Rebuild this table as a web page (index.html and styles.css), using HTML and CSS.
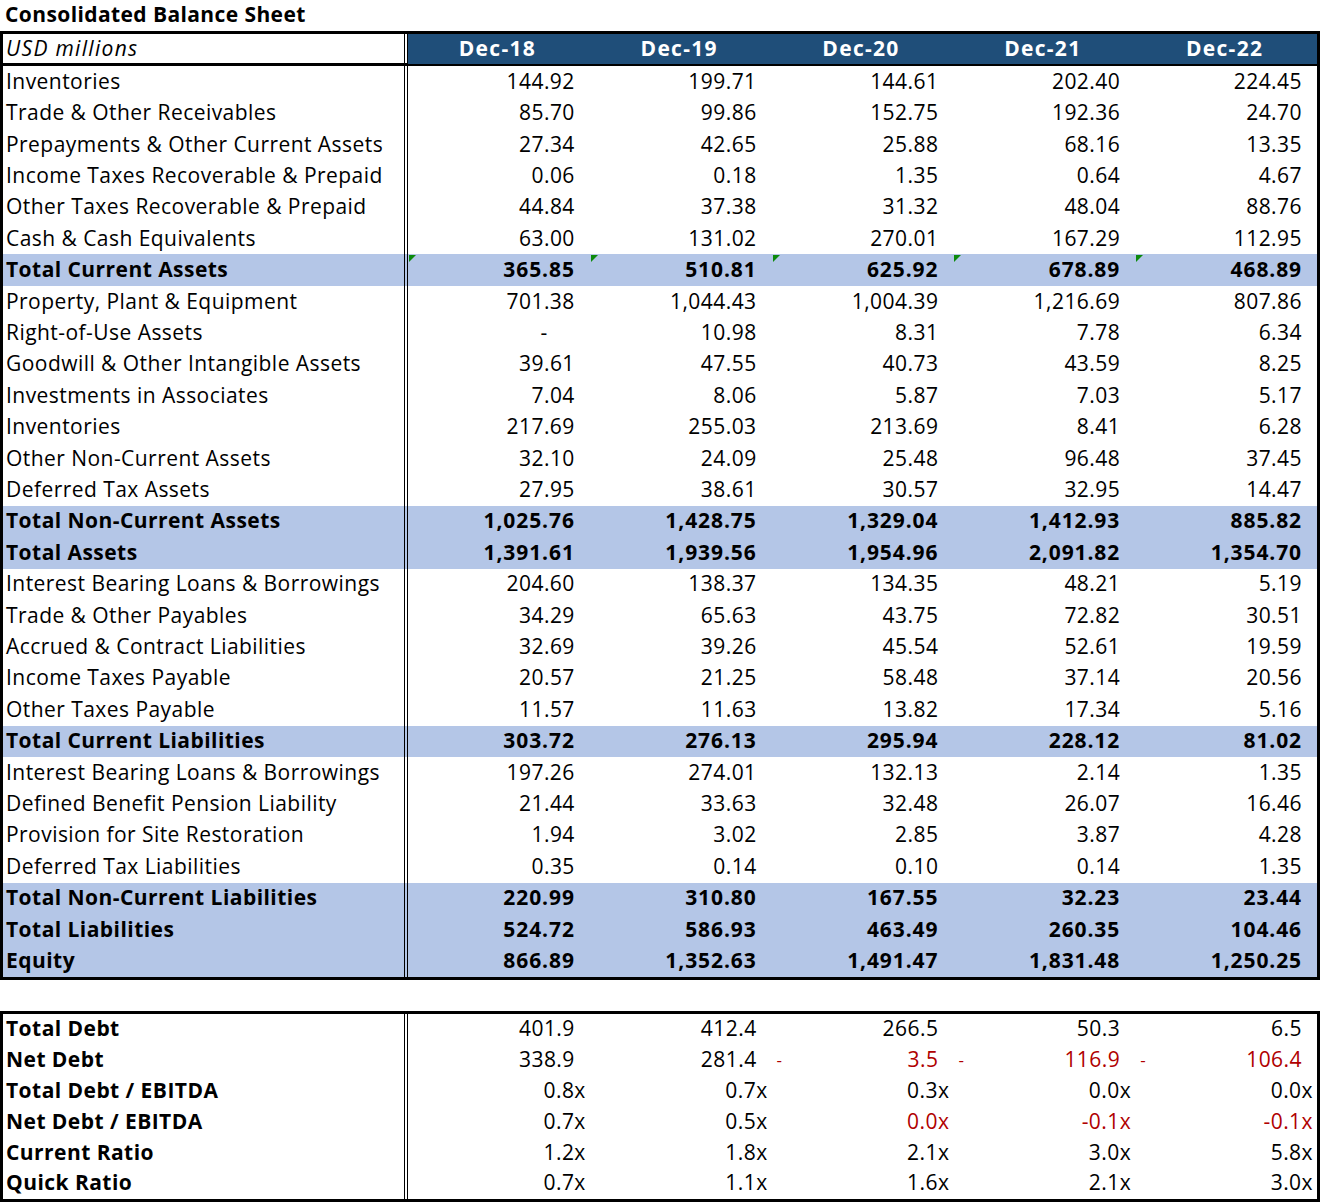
FILE: index.html
```html
<!DOCTYPE html>
<html>
<head>
<meta charset="utf-8">
<link rel="stylesheet" href="styles.css">
</head>
<body>
<div class="title">Consolidated Balance Sheet</div>
<div class="tbl main">
  <div class="row head">
    <div class="label unit">USD millions</div>
    <div class="hcell">Dec-18</div><div class="hcell">Dec-19</div><div class="hcell">Dec-20</div><div class="hcell">Dec-21</div><div class="hcell">Dec-22</div>
  </div>
  <div class="row"><div class="label">Inventories</div><div class="cell">144.92</div><div class="cell">199.71</div><div class="cell">144.61</div><div class="cell">202.40</div><div class="cell">224.45</div></div>
  <div class="row"><div class="label">Trade &amp; Other Receivables</div><div class="cell">85.70</div><div class="cell">99.86</div><div class="cell">152.75</div><div class="cell">192.36</div><div class="cell">24.70</div></div>
  <div class="row"><div class="label">Prepayments &amp; Other Current Assets</div><div class="cell">27.34</div><div class="cell">42.65</div><div class="cell">25.88</div><div class="cell">68.16</div><div class="cell">13.35</div></div>
  <div class="row"><div class="label">Income Taxes Recoverable &amp; Prepaid</div><div class="cell">0.06</div><div class="cell">0.18</div><div class="cell">1.35</div><div class="cell">0.64</div><div class="cell">4.67</div></div>
  <div class="row"><div class="label">Other Taxes Recoverable &amp; Prepaid</div><div class="cell">44.84</div><div class="cell">37.38</div><div class="cell">31.32</div><div class="cell">48.04</div><div class="cell">88.76</div></div>
  <div class="row"><div class="label">Cash &amp; Cash Equivalents</div><div class="cell">63.00</div><div class="cell">131.02</div><div class="cell">270.01</div><div class="cell">167.29</div><div class="cell">112.95</div></div>
  <div class="row total"><div class="label">Total Current Assets</div><div class="cell flag">365.85</div><div class="cell flag">510.81</div><div class="cell flag">625.92</div><div class="cell flag">678.89</div><div class="cell flag">468.89</div></div>
  <div class="row"><div class="label">Property, Plant &amp; Equipment</div><div class="cell">701.38</div><div class="cell">1,044.43</div><div class="cell">1,004.39</div><div class="cell">1,216.69</div><div class="cell">807.86</div></div>
  <div class="row"><div class="label">Right-of-Use Assets</div><div class="cell"><span class="zero">-</span></div><div class="cell">10.98</div><div class="cell">8.31</div><div class="cell">7.78</div><div class="cell">6.34</div></div>
  <div class="row"><div class="label">Goodwill &amp; Other Intangible Assets</div><div class="cell">39.61</div><div class="cell">47.55</div><div class="cell">40.73</div><div class="cell">43.59</div><div class="cell">8.25</div></div>
  <div class="row"><div class="label">Investments in Associates</div><div class="cell">7.04</div><div class="cell">8.06</div><div class="cell">5.87</div><div class="cell">7.03</div><div class="cell">5.17</div></div>
  <div class="row"><div class="label">Inventories</div><div class="cell">217.69</div><div class="cell">255.03</div><div class="cell">213.69</div><div class="cell">8.41</div><div class="cell">6.28</div></div>
  <div class="row"><div class="label">Other Non-Current Assets</div><div class="cell">32.10</div><div class="cell">24.09</div><div class="cell">25.48</div><div class="cell">96.48</div><div class="cell">37.45</div></div>
  <div class="row"><div class="label">Deferred Tax Assets</div><div class="cell">27.95</div><div class="cell">38.61</div><div class="cell">30.57</div><div class="cell">32.95</div><div class="cell">14.47</div></div>
  <div class="row total"><div class="label">Total Non-Current Assets</div><div class="cell">1,025.76</div><div class="cell">1,428.75</div><div class="cell">1,329.04</div><div class="cell">1,412.93</div><div class="cell">885.82</div></div>
  <div class="row total"><div class="label">Total Assets</div><div class="cell">1,391.61</div><div class="cell">1,939.56</div><div class="cell">1,954.96</div><div class="cell">2,091.82</div><div class="cell">1,354.70</div></div>
  <div class="row"><div class="label">Interest Bearing Loans &amp; Borrowings</div><div class="cell">204.60</div><div class="cell">138.37</div><div class="cell">134.35</div><div class="cell">48.21</div><div class="cell">5.19</div></div>
  <div class="row"><div class="label">Trade &amp; Other Payables</div><div class="cell">34.29</div><div class="cell">65.63</div><div class="cell">43.75</div><div class="cell">72.82</div><div class="cell">30.51</div></div>
  <div class="row"><div class="label">Accrued &amp; Contract Liabilities</div><div class="cell">32.69</div><div class="cell">39.26</div><div class="cell">45.54</div><div class="cell">52.61</div><div class="cell">19.59</div></div>
  <div class="row"><div class="label">Income Taxes Payable</div><div class="cell">20.57</div><div class="cell">21.25</div><div class="cell">58.48</div><div class="cell">37.14</div><div class="cell">20.56</div></div>
  <div class="row"><div class="label">Other Taxes Payable</div><div class="cell">11.57</div><div class="cell">11.63</div><div class="cell">13.82</div><div class="cell">17.34</div><div class="cell">5.16</div></div>
  <div class="row total"><div class="label">Total Current Liabilities</div><div class="cell">303.72</div><div class="cell">276.13</div><div class="cell">295.94</div><div class="cell">228.12</div><div class="cell">81.02</div></div>
  <div class="row"><div class="label">Interest Bearing Loans &amp; Borrowings</div><div class="cell">197.26</div><div class="cell">274.01</div><div class="cell">132.13</div><div class="cell">2.14</div><div class="cell">1.35</div></div>
  <div class="row"><div class="label">Defined Benefit Pension Liability</div><div class="cell">21.44</div><div class="cell">33.63</div><div class="cell">32.48</div><div class="cell">26.07</div><div class="cell">16.46</div></div>
  <div class="row"><div class="label">Provision for Site Restoration</div><div class="cell">1.94</div><div class="cell">3.02</div><div class="cell">2.85</div><div class="cell">3.87</div><div class="cell">4.28</div></div>
  <div class="row"><div class="label">Deferred Tax Liabilities</div><div class="cell">0.35</div><div class="cell">0.14</div><div class="cell">0.10</div><div class="cell">0.14</div><div class="cell">1.35</div></div>
  <div class="row total"><div class="label">Total Non-Current Liabilities</div><div class="cell">220.99</div><div class="cell">310.80</div><div class="cell">167.55</div><div class="cell">32.23</div><div class="cell">23.44</div></div>
  <div class="row total"><div class="label">Total Liabilities</div><div class="cell">524.72</div><div class="cell">586.93</div><div class="cell">463.49</div><div class="cell">260.35</div><div class="cell">104.46</div></div>
  <div class="row total"><div class="label">Equity</div><div class="cell">866.89</div><div class="cell">1,352.63</div><div class="cell">1,491.47</div><div class="cell">1,831.48</div><div class="cell">1,250.25</div></div>
</div>

<div class="tbl metrics">
  <div class="row"><div class="label b">Total Debt</div><div class="cell">401.9</div><div class="cell">412.4</div><div class="cell">266.5</div><div class="cell">50.3</div><div class="cell">6.5</div></div>
  <div class="row"><div class="label b">Net Debt</div><div class="cell">338.9</div><div class="cell">281.4</div><div class="cell neg"><span class="dash">-</span>3.5</div><div class="cell neg"><span class="dash">-</span>116.9</div><div class="cell neg"><span class="dash">-</span>106.4</div></div>
  <div class="row ratio"><div class="label b">Total Debt / EBITDA</div><div class="cell">0.8x</div><div class="cell">0.7x</div><div class="cell">0.3x</div><div class="cell">0.0x</div><div class="cell">0.0x</div></div>
  <div class="row ratio"><div class="label b">Net Debt / EBITDA</div><div class="cell">0.7x</div><div class="cell">0.5x</div><div class="cell red">0.0x</div><div class="cell red">-0.1x</div><div class="cell red">-0.1x</div></div>
  <div class="row ratio"><div class="label b">Current Ratio</div><div class="cell">1.2x</div><div class="cell">1.8x</div><div class="cell">2.1x</div><div class="cell">3.0x</div><div class="cell">5.8x</div></div>
  <div class="row ratio"><div class="label b">Quick Ratio</div><div class="cell">0.7x</div><div class="cell">1.1x</div><div class="cell">1.6x</div><div class="cell">2.1x</div><div class="cell">3.0x</div></div>
</div>
</body>
</html>
```
FILE: styles.css
```css
* { box-sizing: border-box; }
body {
  margin: 0;
  background: #fff;
  color: #000;
  font-family: "Open Sans", "Noto Sans", sans-serif;
  font-size: 21px;
  letter-spacing: 0.45px;
}
.title {
  height: 31px;
  line-height: 29px;
  padding-left: 5px;
  font-weight: 700;
  font-size: 21px;
  letter-spacing: 0.4px;
  white-space: nowrap;
}
.tbl {
  width: 1320px;
  border: 3px solid #000;
}
.metrics { margin-top: 31px; }
.row {
  display: grid;
  grid-template-columns: 405px repeat(5, 1fr);
  height: 31.41px;
}
.metrics .row { height: 30.83px; }
.row.head {
  height: 32px;
  border-bottom: 3px solid #000;
}
.label {
  border-right: 4px double #000;
  padding-left: 3px;
  padding-bottom: 2px;
  display: flex;
  align-items: center;
  white-space: nowrap;
  overflow: hidden;
}
.label.unit { font-style: italic; letter-spacing: 1.3px; }
.label.b { font-weight: 700; }
.total .label { letter-spacing: 0.45px; }
.hcell {
  background: #1f4e79;
  color: #fff;
  font-weight: 700;
  letter-spacing: 1.3px;
  display: flex;
  align-items: center;
  justify-content: center;
  padding-bottom: 2px;
  padding-right: 3px;
}
.cell {
  position: relative;
  display: flex;
  align-items: center;
  justify-content: flex-end;
  padding-right: 15px;
  padding-bottom: 2px;
  white-space: nowrap;
}
.ratio .cell { padding-right: 4px; }
.total { background: #b4c6e7; font-weight: 700; }
.total .cell { padding-right: 15px; letter-spacing: 0.9px; }
.zero { margin-right: 27px; }
.neg { color: #b00000; }
.neg .dash { margin-right: auto; padding-left: 5px; font-size: 17px; }
.red { color: #b00000; }
.flag::before {
  content: "";
  position: absolute;
  left: 1px;
  top: 1px;
  width: 0;
  height: 0;
  border-top: 7px solid #0d8a0d;
  border-right: 7px solid transparent;
}
```
